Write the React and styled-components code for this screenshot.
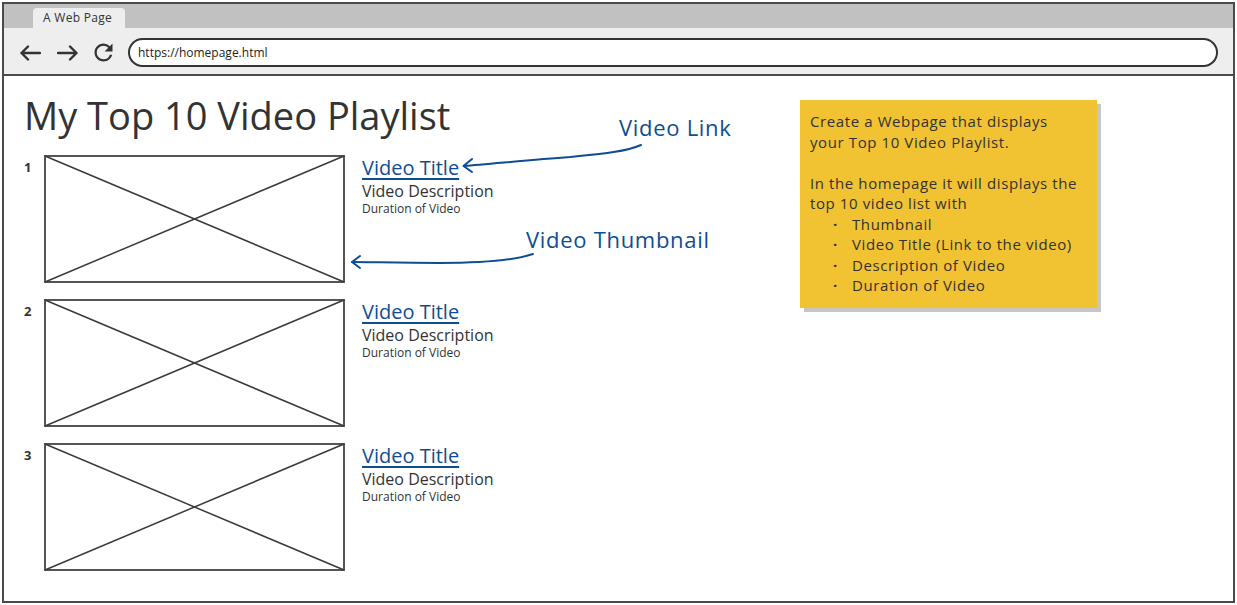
import React from 'react';
import styled, { createGlobalStyle } from 'styled-components';
import { MdRefresh } from 'react-icons/md';

const Global = createGlobalStyle`
  html, body { margin: 0; padding: 0; background: #fff; }
  body { font-family: "Open Sans", "Liberation Sans", sans-serif; color: #333; }
  * { box-sizing: border-box; }
`;

const BLUE = '#0f4d92';

const Window = styled.div`
  margin: 2px;
  width: 1233px;
  height: 601px;
  border: 2px solid #4a4a4a;
  display: flex;
  flex-direction: column;
  overflow: hidden;
`;

const TabBar = styled.div`
  height: 24px;
  background: #c1c1c1;
  display: flex;
  align-items: flex-end;
  padding-left: 29px;
`;

const Tab = styled.div`
  height: 20px;
  width: 92px;
  background: #eeeeee;
  border-radius: 4px 4px 0 0;
  font-size: 12px;
  line-height: 20px;
  letter-spacing: 0.3px;
  padding-left: 10px;
  color: #333;
`;

const Toolbar = styled.div`
  height: 48px;
  background: #eeeeee;
  border-bottom: 2px solid #4a4a4a;
  display: flex;
  align-items: center;
  padding: 3px 15px 0 16px;
`;

const NavIcon = styled.svg`
  display: block;
  flex: none;
  margin-right: ${p => p.$mr || 0}px;
`;

const Reload = styled(MdRefresh)`
  display: block;
  flex: none;
  color: #333;
  margin-right: 11px;
`;

const Address = styled.div`
  flex: 1;
  height: 29px;
  border: 2px solid #333;
  border-radius: 15px;
  background: #fff;
  font-size: 12px;
  line-height: 25px;
  padding-left: 8px;
  color: #222;
`;

const Content = styled.div`
  flex: 1;
  position: relative;
  display: flex;
  padding: 16px 0 0 20px;
`;

const Main = styled.div`
  width: 776px;
  flex: none;
`;

const Title = styled.h1`
  margin: 0;
  font-size: 38px;
  line-height: 46px;
  font-weight: 400;
  color: #333;
`;

const List = styled.ol`
  list-style: none;
  margin: 17px 0 0;
  padding: 0;
  display: flex;
  flex-direction: column;
  gap: 16px;
`;

const Item = styled.li`
  display: grid;
  grid-template-columns: 20px 301px auto;
  height: 128px;
`;

const Num = styled.div`
  font-size: 13px;
  font-weight: 700;
  line-height: 16px;
  padding-top: 4px;
  color: #333;
`;

const Info = styled.div`
  display: flex;
  flex-direction: column;
  padding: 2px 0 0 17px;
`;

const VideoLink = styled.a`
  font-size: 20px;
  line-height: 22px;
  color: ${BLUE};
  text-decoration: underline;
  text-underline-offset: 3px;
  text-decoration-thickness: 1.5px;
  margin-bottom: 2px;
  align-self: flex-start;
`;

const Desc = styled.div`
  font-size: 16px;
  line-height: 20px;
  color: #333;
`;

const Duration = styled.div`
  font-size: 12px;
  line-height: 14px;
  margin-top: 1px;
  color: #333;
`;

const Note = styled.aside`
  width: 297px;
  height: 208px;
  margin-top: 8px;
  background: #f1c232;
  box-shadow: 4px 4px 0 #c6c6c6;
  padding: 11px 16px 11px 10px;
  font-size: 15px;
  line-height: 20.5px;
  letter-spacing: 0.6px;
  color: #333;
`;

const NoteP = styled.p`
  margin: 0 0 20.5px;
`;

const Bullets = styled.ul`
  list-style: none;
  margin: 0;
  padding: 0;
`;

const Bullet = styled.li`
  position: relative;
  padding-left: 42px;
  &::before {
    content: '·';
    position: absolute;
    left: 23px;
    font-weight: 700;
  }
`;

const Label = styled.div`
  position: absolute;
  left: ${p => p.$x}px;
  top: ${p => p.$y}px;
  font-size: 22px;
  line-height: 26px;
  letter-spacing: 0.7px;
  color: ${BLUE};
  white-space: nowrap;
`;

const Arrows = styled.svg`
  position: absolute;
  left: 0;
  top: 0;
  pointer-events: none;
  overflow: visible;
`;

function Thumb() {
  return (
    <svg width="301" height="128" viewBox="0 0 301 128">
      <rect x="1" y="1" width="299" height="126" fill="#fff" stroke="#555" strokeWidth="2" />
      <line x1="1" y1="1" x2="300" y2="127" stroke="#3a3a3a" strokeWidth="1.5" />
      <line x1="300" y1="1" x2="1" y2="127" stroke="#3a3a3a" strokeWidth="1.5" />
    </svg>
  );
}

const videos = [1, 2, 3];

export default function App() {
  return (
    <>
      <Global />
      <Window>
        <TabBar>
          <Tab>A Web Page</Tab>
        </TabBar>
        <Toolbar>
          <NavIcon width="21" height="16" viewBox="0 0 21 16" $mr={16}>
            <path d="M1.5 8H20M8 1.5L1.5 8L8 14.5" fill="none" stroke="#333" strokeWidth="2.4" strokeLinecap="round" strokeLinejoin="round" />
          </NavIcon>
          <NavIcon width="21" height="16" viewBox="0 0 21 16" $mr={12}>
            <path d="M1 8H19.5M13 1.5L19.5 8L13 14.5" fill="none" stroke="#333" strokeWidth="2.4" strokeLinecap="round" strokeLinejoin="round" />
          </NavIcon>
          <Reload size={27} />
          <Address>https://homepage.html</Address>
        </Toolbar>
        <Content>
          <Main>
            <Title>My Top 10 Video Playlist</Title>
            <List>
              {videos.map(n => (
                <Item key={n}>
                  <Num>{n}</Num>
                  <Thumb />
                  <Info>
                    <VideoLink href="#">Video Title</VideoLink>
                    <Desc>Video Description</Desc>
                    <Duration>Duration of Video</Duration>
                  </Info>
                </Item>
              ))}
            </List>
          </Main>
          <Note>
            <NoteP>Create a Webpage that displays your Top 10 Video Playlist.</NoteP>
            <div>In the homepage it will displays the top 10 video list with</div>
            <Bullets>
              <Bullet>Thumbnail</Bullet>
              <Bullet>Video Title (Link to the video)</Bullet>
              <Bullet>Description of Video</Bullet>
              <Bullet>Duration of Video</Bullet>
            </Bullets>
          </Note>
          <Label $x={615} $y={38}>Video Link</Label>
          <Label $x={522} $y={150}>Video Thumbnail</Label>
          <Arrows width="1229" height="523" viewBox="0 0 1229 523">
            <g transform="translate(-4 -76)" fill="none" stroke={BLUE} strokeWidth="2" strokeLinecap="round" strokeLinejoin="round">
              <path d="M641 145 C 625 152, 600 154, 570 157 C 530 160, 490 164, 464 166" />
              <path d="M472 159 L463.5 166 L472 172" />
              <path d="M533 254 C 515 260, 480 263, 440 263 C 400 263, 370 262, 352 262" />
              <path d="M360 256 L352 262 L360 268" />
            </g>
          </Arrows>
        </Content>
      </Window>
    </>
  );
}
